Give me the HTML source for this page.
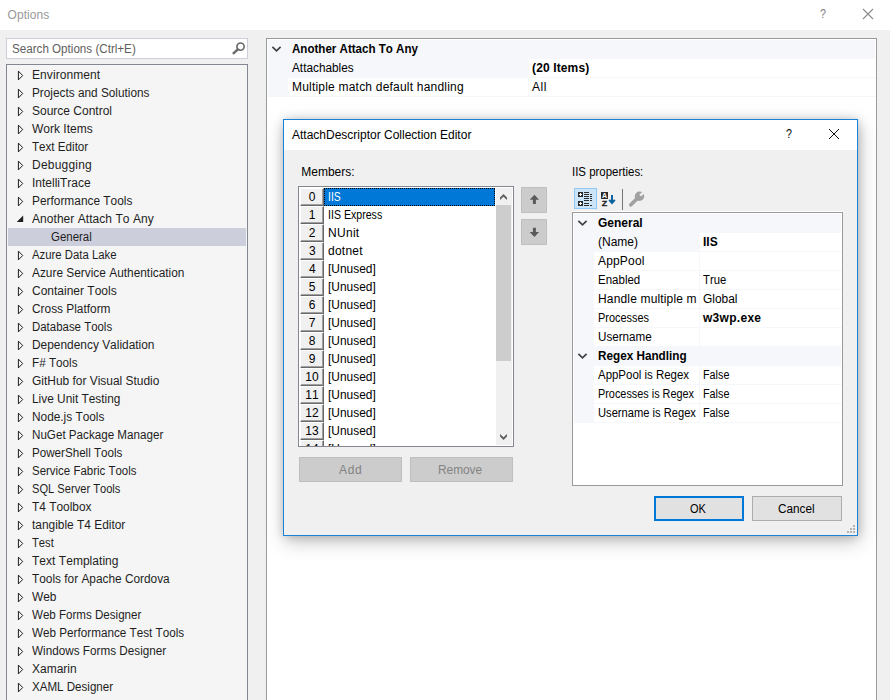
<!DOCTYPE html>
<html lang="en">
<head>
<meta charset="utf-8">
<title>Options</title>
<style>
html,body{margin:0;padding:0}
body{width:890px;height:700px;overflow:hidden;position:relative;background:#f0f0f0;font:12px/16px "Liberation Sans",sans-serif;color:#000}
div,svg{position:absolute;box-sizing:border-box}
.t{position:absolute;white-space:pre;font-kerning:none;line-height:16px;height:16px;transform-origin:0 50%;display:block}
.titlebar{left:0;top:0;width:890px;height:30px;background:#fff}
.search{left:6px;top:38px;width:242px;height:21px;background:#fff;border:1px solid #cccedb}
.tree{left:6px;top:64px;width:242px;height:650px;background:#f5f5f5;border:1px solid #828790}
.sel{left:8px;top:228px;width:238px;height:18px;background:#cccedb}
.grid{left:266px;top:38px;width:611px;height:680px;background:#fff;border:1px solid #9a9a9a}
.gut{background:#f5f7fb}
.hl{background:#f5f7fb}
.shadow{left:284px;top:120px;width:574px;height:416px;box-shadow:0 0 9px rgba(0,0,0,.20),1px 5px 18px rgba(0,0,0,.26)}
.dlg{left:283px;top:119px;width:575px;height:417px;background:#f0f0f0;border:1px solid #1883d7}
.dtitle{left:0;top:0;width:573px;height:30px;background:#fff}
.list{left:298px;top:186px;width:216px;height:261px;background:#fff;border:1px solid #828790;overflow:hidden}
.nb{left:1px;width:24px;height:18px;background:#f0f0f0;border:1px solid;border-color:#fff #696969 #696969 #fff;box-shadow:inset -1px -1px 0 #a0a0a0}
.lsel{left:25px;top:1px;width:171px;height:18px;background:#0078d7;outline:1px dotted #000;outline-offset:-1px}
.sb{left:197px;top:1px;width:16px;height:257px;background:#f0f0f0}
.thumb{left:0;top:17px;width:15px;height:156px;background:#cdcdcd}
.mv{width:26px;height:26px;background:#cccccc;border:1px solid #bfbfbf}
.dis{height:25px;background:#cccccc;border:1px solid #bfbfbf}
.btn{height:25px;background:#e1e1e1;border:1px solid #adadad}
.pg{left:572px;top:212px;width:271px;height:274px;background:#fff;border:1px solid #9a9a9a}
.a{overflow:visible}
</style>
</head>
<body>
<div class="titlebar"></div>
<svg style="left:862px;top:8px" width="12" height="12" viewBox="0 0 12 12"><path d="M1 1L11 11M11 1L1 11" stroke="#8c8c8c" stroke-width="1.1" fill="none"/></svg>

<div class="search"></div>
<svg style="left:231px;top:41px" width="16" height="15" viewBox="0 0 16 15"><circle cx="9.500" cy="5.600" r="3.650" fill="none" stroke="#6a6a6a" stroke-width="1.650"/><path d="M7.100 8.100L1.900 12.900" stroke="#6a6a6a" stroke-width="2.500" fill="none"/></svg>

<div class="tree"></div>
<div class="sel"></div>
<svg class="a" style="left:16px;top:70px" width="9" height="11" viewBox="0 0 9 11"><path d="M2.400 1.100V9.900L6.700 5.500Z" fill="none" stroke="#1e1e1e" stroke-width="1"/></svg>
<svg class="a" style="left:16px;top:88px" width="9" height="11" viewBox="0 0 9 11"><path d="M2.400 1.100V9.900L6.700 5.500Z" fill="none" stroke="#1e1e1e" stroke-width="1"/></svg>
<svg class="a" style="left:16px;top:106px" width="9" height="11" viewBox="0 0 9 11"><path d="M2.400 1.100V9.900L6.700 5.500Z" fill="none" stroke="#1e1e1e" stroke-width="1"/></svg>
<svg class="a" style="left:16px;top:124px" width="9" height="11" viewBox="0 0 9 11"><path d="M2.400 1.100V9.900L6.700 5.500Z" fill="none" stroke="#1e1e1e" stroke-width="1"/></svg>
<svg class="a" style="left:16px;top:142px" width="9" height="11" viewBox="0 0 9 11"><path d="M2.400 1.100V9.900L6.700 5.500Z" fill="none" stroke="#1e1e1e" stroke-width="1"/></svg>
<svg class="a" style="left:16px;top:160px" width="9" height="11" viewBox="0 0 9 11"><path d="M2.400 1.100V9.900L6.700 5.500Z" fill="none" stroke="#1e1e1e" stroke-width="1"/></svg>
<svg class="a" style="left:16px;top:178px" width="9" height="11" viewBox="0 0 9 11"><path d="M2.400 1.100V9.900L6.700 5.500Z" fill="none" stroke="#1e1e1e" stroke-width="1"/></svg>
<svg class="a" style="left:16px;top:196px" width="9" height="11" viewBox="0 0 9 11"><path d="M2.400 1.100V9.900L6.700 5.500Z" fill="none" stroke="#1e1e1e" stroke-width="1"/></svg>
<svg class="a" style="left:16px;top:214px" width="9" height="11" viewBox="0 0 9 11"><path d="M0.800 8H7.200V1.600Z" fill="#1e1e1e"/></svg>
<svg class="a" style="left:16px;top:250px" width="9" height="11" viewBox="0 0 9 11"><path d="M2.400 1.100V9.900L6.700 5.500Z" fill="none" stroke="#1e1e1e" stroke-width="1"/></svg>
<svg class="a" style="left:16px;top:268px" width="9" height="11" viewBox="0 0 9 11"><path d="M2.400 1.100V9.900L6.700 5.500Z" fill="none" stroke="#1e1e1e" stroke-width="1"/></svg>
<svg class="a" style="left:16px;top:286px" width="9" height="11" viewBox="0 0 9 11"><path d="M2.400 1.100V9.900L6.700 5.500Z" fill="none" stroke="#1e1e1e" stroke-width="1"/></svg>
<svg class="a" style="left:16px;top:304px" width="9" height="11" viewBox="0 0 9 11"><path d="M2.400 1.100V9.900L6.700 5.500Z" fill="none" stroke="#1e1e1e" stroke-width="1"/></svg>
<svg class="a" style="left:16px;top:322px" width="9" height="11" viewBox="0 0 9 11"><path d="M2.400 1.100V9.900L6.700 5.500Z" fill="none" stroke="#1e1e1e" stroke-width="1"/></svg>
<svg class="a" style="left:16px;top:340px" width="9" height="11" viewBox="0 0 9 11"><path d="M2.400 1.100V9.900L6.700 5.500Z" fill="none" stroke="#1e1e1e" stroke-width="1"/></svg>
<svg class="a" style="left:16px;top:358px" width="9" height="11" viewBox="0 0 9 11"><path d="M2.400 1.100V9.900L6.700 5.500Z" fill="none" stroke="#1e1e1e" stroke-width="1"/></svg>
<svg class="a" style="left:16px;top:376px" width="9" height="11" viewBox="0 0 9 11"><path d="M2.400 1.100V9.900L6.700 5.500Z" fill="none" stroke="#1e1e1e" stroke-width="1"/></svg>
<svg class="a" style="left:16px;top:394px" width="9" height="11" viewBox="0 0 9 11"><path d="M2.400 1.100V9.900L6.700 5.500Z" fill="none" stroke="#1e1e1e" stroke-width="1"/></svg>
<svg class="a" style="left:16px;top:412px" width="9" height="11" viewBox="0 0 9 11"><path d="M2.400 1.100V9.900L6.700 5.500Z" fill="none" stroke="#1e1e1e" stroke-width="1"/></svg>
<svg class="a" style="left:16px;top:430px" width="9" height="11" viewBox="0 0 9 11"><path d="M2.400 1.100V9.900L6.700 5.500Z" fill="none" stroke="#1e1e1e" stroke-width="1"/></svg>
<svg class="a" style="left:16px;top:448px" width="9" height="11" viewBox="0 0 9 11"><path d="M2.400 1.100V9.900L6.700 5.500Z" fill="none" stroke="#1e1e1e" stroke-width="1"/></svg>
<svg class="a" style="left:16px;top:466px" width="9" height="11" viewBox="0 0 9 11"><path d="M2.400 1.100V9.900L6.700 5.500Z" fill="none" stroke="#1e1e1e" stroke-width="1"/></svg>
<svg class="a" style="left:16px;top:484px" width="9" height="11" viewBox="0 0 9 11"><path d="M2.400 1.100V9.900L6.700 5.500Z" fill="none" stroke="#1e1e1e" stroke-width="1"/></svg>
<svg class="a" style="left:16px;top:502px" width="9" height="11" viewBox="0 0 9 11"><path d="M2.400 1.100V9.900L6.700 5.500Z" fill="none" stroke="#1e1e1e" stroke-width="1"/></svg>
<svg class="a" style="left:16px;top:520px" width="9" height="11" viewBox="0 0 9 11"><path d="M2.400 1.100V9.900L6.700 5.500Z" fill="none" stroke="#1e1e1e" stroke-width="1"/></svg>
<svg class="a" style="left:16px;top:538px" width="9" height="11" viewBox="0 0 9 11"><path d="M2.400 1.100V9.900L6.700 5.500Z" fill="none" stroke="#1e1e1e" stroke-width="1"/></svg>
<svg class="a" style="left:16px;top:556px" width="9" height="11" viewBox="0 0 9 11"><path d="M2.400 1.100V9.900L6.700 5.500Z" fill="none" stroke="#1e1e1e" stroke-width="1"/></svg>
<svg class="a" style="left:16px;top:574px" width="9" height="11" viewBox="0 0 9 11"><path d="M2.400 1.100V9.900L6.700 5.500Z" fill="none" stroke="#1e1e1e" stroke-width="1"/></svg>
<svg class="a" style="left:16px;top:592px" width="9" height="11" viewBox="0 0 9 11"><path d="M2.400 1.100V9.900L6.700 5.500Z" fill="none" stroke="#1e1e1e" stroke-width="1"/></svg>
<svg class="a" style="left:16px;top:610px" width="9" height="11" viewBox="0 0 9 11"><path d="M2.400 1.100V9.900L6.700 5.500Z" fill="none" stroke="#1e1e1e" stroke-width="1"/></svg>
<svg class="a" style="left:16px;top:628px" width="9" height="11" viewBox="0 0 9 11"><path d="M2.400 1.100V9.900L6.700 5.500Z" fill="none" stroke="#1e1e1e" stroke-width="1"/></svg>
<svg class="a" style="left:16px;top:646px" width="9" height="11" viewBox="0 0 9 11"><path d="M2.400 1.100V9.900L6.700 5.500Z" fill="none" stroke="#1e1e1e" stroke-width="1"/></svg>
<svg class="a" style="left:16px;top:664px" width="9" height="11" viewBox="0 0 9 11"><path d="M2.400 1.100V9.900L6.700 5.500Z" fill="none" stroke="#1e1e1e" stroke-width="1"/></svg>
<svg class="a" style="left:16px;top:682px" width="9" height="11" viewBox="0 0 9 11"><path d="M2.400 1.100V9.900L6.700 5.500Z" fill="none" stroke="#1e1e1e" stroke-width="1"/></svg>

<div class="grid">
  <div class="gut" style="left:1px;top:1px;width:607px;height:19px"></div>
  <div class="gut" style="left:1px;top:20px;width:20px;height:38px"></div>
  <div class="hl" style="left:21px;top:20px;width:241px;height:19px"></div>
  <div class="gut" style="left:21px;top:38px;width:588px;height:1px"></div>
  <div class="gut" style="left:21px;top:57px;width:588px;height:1px"></div>
  <div class="gut" style="left:261px;top:20px;width:1px;height:38px"></div>
  <svg style="left:4px;top:6px" width="11" height="8" viewBox="0 0 11 8"><path d="M1.4 1.9L5.5 5.9L9.6 1.9" fill="none" stroke="#404040" stroke-width="1.7"/></svg>
</div>

<div class="shadow"></div>
<div class="dlg">
  <div class="dtitle"></div>
</div>
<svg style="left:828px;top:128px" width="12" height="12" viewBox="0 0 12 12"><path d="M1 1L11 11M11 1L1 11" stroke="#000" stroke-width="0.95" fill="none"/></svg>

<div class="list">
  <div class="lsel"></div>
<div class="nb" style="top:1px"></div>
<div class="nb" style="top:19px"></div>
<div class="nb" style="top:37px"></div>
<div class="nb" style="top:55px"></div>
<div class="nb" style="top:73px"></div>
<div class="nb" style="top:91px"></div>
<div class="nb" style="top:109px"></div>
<div class="nb" style="top:127px"></div>
<div class="nb" style="top:145px"></div>
<div class="nb" style="top:163px"></div>
<div class="nb" style="top:181px"></div>
<div class="nb" style="top:199px"></div>
<div class="nb" style="top:217px"></div>
<div class="nb" style="top:235px"></div>
<div class="nb" style="top:253px"></div>
  <div class="sb"><div class="thumb"></div>
    <svg style="left:0;top:0" width="16" height="257" viewBox="0 0 16 257"><path d="M7.500 6L11 9.500V12L7.500 8.700L4 12V9.500Z" fill="#606060"/><path d="M7.500 252L11 248.500V246L7.500 249.300L4 246V248.500Z" fill="#606060"/></svg>
  </div>
</div>
<div class="mv" style="left:521px;top:187px"><svg style="left:7px;top:6px" width="11" height="12" viewBox="0 0 11 12"><path d="M5.400 0.800L0.700 5.800H3.900V10.100H6.900V5.800H10.100Z" fill="#5a5a5a"/></svg></div>
<div class="mv" style="left:521px;top:219px"><svg style="left:7px;top:6px" width="11" height="12" viewBox="0 0 11 12"><path d="M5.400 11.100L0.700 6.100H3.900V1.800H6.900V6.100H10.100Z" fill="#5a5a5a"/></svg></div>
<div class="dis" style="left:299px;top:457px;width:103px"></div>
<div class="dis" style="left:410px;top:457px;width:103px"></div>

<div style="left:572px;top:211px;width:271px;height:1px;background:#fff"></div>
<div style="left:574px;top:188px;width:23px;height:21px;background:#cce4f7;border:1px solid #90c8f6"></div>
<svg style="left:574px;top:188px" width="23" height="21" viewBox="0 0 23 21" shape-rendering="crispEdges"><g fill="#2b2b2b"><rect x="4" y="4" width="5" height="5"/><rect x="4" y="13" width="5" height="5"/><rect x="10" y="4" width="5" height="1"/><rect x="10" y="6" width="5" height="1"/><rect x="10" y="8" width="5" height="1"/><rect x="10" y="10" width="5" height="1"/><rect x="10" y="12" width="5" height="1"/><rect x="10" y="15" width="5" height="1"/><rect x="10" y="17" width="5" height="1"/><rect x="16" y="6" width="2" height="1"/><rect x="16" y="8" width="2" height="1"/><rect x="16" y="10" width="2" height="1"/><rect x="16" y="12" width="2" height="1"/><rect x="16" y="17" width="2" height="1"/></g><g fill="#fff"><rect x="6" y="5" width="1" height="3"/><rect x="5" y="6" width="3" height="1"/><rect x="6" y="14" width="1" height="3"/><rect x="5" y="15" width="3" height="1"/></g></svg>
<svg style="left:599px;top:188px" width="20" height="21" viewBox="0 0 20 21"><rect x="2" y="4" width="7" height="7" fill="#2b2b2b"/><text x="5.5" y="10.2" text-anchor="middle" font-family="Liberation Sans,sans-serif" font-size="7" font-weight="bold" fill="#fff">A</text><text x="5.500" y="18" text-anchor="middle" font-family="Liberation Sans,sans-serif" font-size="7.600" font-weight="bold" fill="#1e1e1e" stroke="#1e1e1e" stroke-width="0.300" textLength="5.400" lengthAdjust="spacingAndGlyphs">Z</text><path d="M13 7v8" stroke="#0f62a0" stroke-width="2" fill="none"/><path d="M10.200 11.800L13 15L15.800 11.800" stroke="#0f62a0" stroke-width="2" fill="none"/></svg>
<div style="left:622px;top:189px;width:1px;height:21px;background:#767676"></div>
<svg style="left:626px;top:188px" width="22" height="22" viewBox="0 0 22 22"><path d="M4.800 16.800L11.500 10.200" stroke="#a0a0a0" stroke-width="3.700" stroke-linecap="round" fill="none"/><circle cx="13.500" cy="8.300" r="4.700" fill="#a0a0a0"/><path d="M14.200 7.600L19 2.800" stroke="#f0f0f0" stroke-width="2.400" fill="none"/></svg>

<div class="pg">
  <div class="gut" style="left:1px;top:1px;width:267px;height:19px"></div>
  <div class="gut" style="left:1px;top:20px;width:20px;height:190px"></div>
  <div class="gut" style="left:1px;top:133px;width:267px;height:20px"></div>
  <div class="hl" style="left:21px;top:20px;width:106px;height:19px"></div>
  <div class="gut" style="left:126px;top:20px;width:1px;height:114px"></div>
  <div class="gut" style="left:126px;top:153px;width:1px;height:57px"></div>
  <div class="gut" style="left:21px;top:38px;width:248px;height:1px"></div>
  <div class="gut" style="left:21px;top:57px;width:248px;height:1px"></div>
  <div class="gut" style="left:21px;top:76px;width:248px;height:1px"></div>
  <div class="gut" style="left:21px;top:95px;width:248px;height:1px"></div>
  <div class="gut" style="left:21px;top:114px;width:248px;height:1px"></div>
  <div class="gut" style="left:21px;top:171px;width:248px;height:1px"></div>
  <div class="gut" style="left:21px;top:190px;width:248px;height:1px"></div>
  <div class="gut" style="left:21px;top:209px;width:248px;height:1px"></div>
  <svg style="left:4px;top:6px" width="11" height="8" viewBox="0 0 11 8"><path d="M1.4 1.9L5.5 5.9L9.6 1.9" fill="none" stroke="#404040" stroke-width="1.7"/></svg>
  <svg style="left:4px;top:139px" width="11" height="8" viewBox="0 0 11 8"><path d="M1.4 1.9L5.5 5.9L9.6 1.9" fill="none" stroke="#404040" stroke-width="1.7"/></svg>
</div>
<div class="btn" style="left:654px;top:496px;width:90px;border:2px solid #0078d7"></div>
<div class="btn" style="left:752px;top:496px;width:90px"></div>
<svg style="left:845px;top:524px" width="12" height="12" viewBox="0 0 12 12" shape-rendering="crispEdges"><g fill="#b4b4b4"><rect x="8" y="1" width="2" height="2"/><rect x="5" y="4" width="2" height="2"/><rect x="8" y="4" width="2" height="2"/><rect x="2" y="7" width="2" height="2"/><rect x="5" y="7" width="2" height="2"/><rect x="8" y="7" width="2" height="2"/></g></svg>

<span class="t" style="left:32px;top:67px;letter-spacing:0.072px;color:#1e1e1e;">Environment</span>
<span class="t" style="left:32px;top:85px;transform:scaleX(0.9835);color:#1e1e1e;">Projects and Solutions</span>
<span class="t" style="left:32px;top:103px;color:#1e1e1e;">Source Control</span>
<span class="t" style="left:32px;top:121px;color:#1e1e1e;">Work Items</span>
<span class="t" style="left:32px;top:139px;transform:scaleX(0.9685);color:#1e1e1e;">Text Editor</span>
<span class="t" style="left:32px;top:157px;letter-spacing:0.216px;color:#1e1e1e;">Debugging</span>
<span class="t" style="left:32px;top:175px;color:#1e1e1e;">IntelliTrace</span>
<span class="t" style="left:32px;top:193px;transform:scaleX(0.9907);color:#1e1e1e;">Performance Tools</span>
<span class="t" style="left:32px;top:211px;letter-spacing:0.050px;color:#1e1e1e;">Another Attach To Any</span>
<span class="t" style="left:51px;top:229px;transform:scaleX(0.9549);color:#1e1e1e;">General</span>
<span class="t" style="left:32px;top:247px;transform:scaleX(0.9454);color:#1e1e1e;">Azure Data Lake</span>
<span class="t" style="left:32px;top:265px;transform:scaleX(0.9895);color:#1e1e1e;">Azure Service Authentication</span>
<span class="t" style="left:32px;top:283px;color:#1e1e1e;">Container Tools</span>
<span class="t" style="left:32px;top:301px;transform:scaleX(0.9891);color:#1e1e1e;">Cross Platform</span>
<span class="t" style="left:32px;top:319px;transform:scaleX(0.9532);color:#1e1e1e;">Database Tools</span>
<span class="t" style="left:32px;top:337px;transform:scaleX(0.9923);color:#1e1e1e;">Dependency Validation</span>
<span class="t" style="left:32px;top:355px;transform:scaleX(0.9752);color:#1e1e1e;">F# Tools</span>
<span class="t" style="left:32px;top:373px;transform:scaleX(0.9948);color:#1e1e1e;">GitHub for Visual Studio</span>
<span class="t" style="left:32px;top:391px;transform:scaleX(0.9898);color:#1e1e1e;">Live Unit Testing</span>
<span class="t" style="left:32px;top:409px;transform:scaleX(0.9872);color:#1e1e1e;">Node.js Tools</span>
<span class="t" style="left:32px;top:427px;transform:scaleX(0.9696);color:#1e1e1e;">NuGet Package Manager</span>
<span class="t" style="left:32px;top:445px;transform:scaleX(0.9684);color:#1e1e1e;">PowerShell Tools</span>
<span class="t" style="left:32px;top:463px;transform:scaleX(0.9547);color:#1e1e1e;">Service Fabric Tools</span>
<span class="t" style="left:32px;top:481px;transform:scaleX(0.9270);color:#1e1e1e;">SQL Server Tools</span>
<span class="t" style="left:32px;top:499px;transform:scaleX(0.9916);color:#1e1e1e;">T4 Toolbox</span>
<span class="t" style="left:32px;top:517px;transform:scaleX(0.9920);color:#1e1e1e;">tangible T4 Editor</span>
<span class="t" style="left:32px;top:535px;transform:scaleX(0.9333);color:#1e1e1e;">Test</span>
<span class="t" style="left:32px;top:553px;letter-spacing:0.031px;color:#1e1e1e;">Text Templating</span>
<span class="t" style="left:32px;top:571px;transform:scaleX(0.9878);color:#1e1e1e;">Tools for Apache Cordova</span>
<span class="t" style="left:32px;top:589px;transform:scaleX(0.9930);color:#1e1e1e;">Web</span>
<span class="t" style="left:32px;top:607px;transform:scaleX(0.9641);color:#1e1e1e;">Web Forms Designer</span>
<span class="t" style="left:32px;top:625px;transform:scaleX(0.9748);color:#1e1e1e;">Web Performance Test Tools</span>
<span class="t" style="left:32px;top:643px;transform:scaleX(0.9769);color:#1e1e1e;">Windows Forms Designer</span>
<span class="t" style="left:32px;top:661px;color:#1e1e1e;">Xamarin</span>
<span class="t" style="left:32px;top:679px;transform:scaleX(0.9650);color:#1e1e1e;">XAML Designer</span>
<span class="t" style="left:7.53px;top:7px;letter-spacing:0.074px;color:#999;">Options</span>
<span class="t" style="left:11.57px;top:40.8px;transform:scaleX(0.9690);color:#5e5e5e;">Search Options (Ctrl+E)</span>
<span class="t" style="left:819.86px;top:6.2px;transform:scaleX(0.7903);color:#7c7c7c;font-size:13.5px;">?</span>
<span class="t" style="left:786.06px;top:126px;transform:scaleX(0.7903);font-size:13.5px;">?</span>
<span class="t" style="left:292px;top:40.5px;transform:scaleX(0.9640);font-weight:bold;">Another Attach To Any</span>
<span class="t" style="left:292px;top:59.5px;transform:scaleX(0.9828);">Attachables</span>
<span class="t" style="left:292px;top:78.5px;letter-spacing:0.205px;">Multiple match default handling</span>
<span class="t" style="left:532px;top:59.5px;letter-spacing:0.131px;font-weight:bold;">(20 Items)</span>
<span class="t" style="left:532px;top:78.5px;letter-spacing:0.583px;">All</span>
<span class="t" style="left:291.98px;top:126.5px;">AttachDescriptor Collection Editor</span>
<span class="t" style="left:301.22px;top:164px;">Members:</span>
<span class="t" style="left:572.14px;top:164px;transform:scaleX(0.9545);">IIS properties:</span>
<span class="t" style="left:328px;top:189px;transform:scaleX(0.8640);color:#fff;">IIS</span>
<span class="t" style="left:308.86px;top:189px;">0</span>
<span class="t" style="left:328px;top:207px;transform:scaleX(0.8831);">IIS Express</span>
<span class="t" style="left:308.7px;top:207px;">1</span>
<span class="t" style="left:328px;top:225px;letter-spacing:0.296px;">NUnit</span>
<span class="t" style="left:308.86px;top:225px;">2</span>
<span class="t" style="left:328px;top:243px;letter-spacing:0.245px;">dotnet</span>
<span class="t" style="left:308.9px;top:243px;">3</span>
<span class="t" style="left:328px;top:261px;transform:scaleX(0.9942);">[Unused]</span>
<span class="t" style="left:308.9px;top:261px;">4</span>
<span class="t" style="left:328px;top:279px;transform:scaleX(0.9942);">[Unused]</span>
<span class="t" style="left:308.87px;top:279px;">5</span>
<span class="t" style="left:328px;top:297px;transform:scaleX(0.9942);">[Unused]</span>
<span class="t" style="left:308.82px;top:297px;">6</span>
<span class="t" style="left:328px;top:315px;transform:scaleX(0.9942);">[Unused]</span>
<span class="t" style="left:308.86px;top:315px;">7</span>
<span class="t" style="left:328px;top:333px;transform:scaleX(0.9942);">[Unused]</span>
<span class="t" style="left:308.86px;top:333px;">8</span>
<span class="t" style="left:328px;top:351px;transform:scaleX(0.9942);">[Unused]</span>
<span class="t" style="left:308.87px;top:351px;">9</span>
<span class="t" style="left:328px;top:369px;transform:scaleX(0.9942);">[Unused]</span>
<span class="t" style="left:305.3px;top:369px;">10</span>
<span class="t" style="left:328px;top:387px;transform:scaleX(0.9942);">[Unused]</span>
<span class="t" style="left:305.36px;top:387px;">11</span>
<span class="t" style="left:328px;top:405px;transform:scaleX(0.9942);">[Unused]</span>
<span class="t" style="left:305.37px;top:405px;">12</span>
<span class="t" style="left:328px;top:423px;transform:scaleX(0.9942);">[Unused]</span>
<span class="t" style="left:305.33px;top:423px;">13</span>
<span class="t" style="left:328px;top:441px;transform:scaleX(0.9942);clip-path:inset(0 0 11px 0);">[Unused]</span>
<span class="t" style="left:305.24px;top:441px;clip-path:inset(0 0 11px 0);">14</span>
<span class="t" style="left:338.98px;top:461.5px;letter-spacing:0.723px;color:#838383;">Add</span>
<span class="t" style="left:438.43px;top:461.5px;transform:scaleX(0.9869);color:#838383;">Remove</span>
<span class="t" style="left:690.08px;top:500.5px;transform:scaleX(0.9137);">OK</span>
<span class="t" style="left:778px;top:500.5px;transform:scaleX(0.9794);">Cancel</span>
<span class="t" style="left:598px;top:214.5px;font-weight:bold;">General</span>
<span class="t" style="left:598px;top:233.5px;">(Name)</span>
<span class="t" style="left:703px;top:233.5px;font-weight:bold;">IIS</span>
<span class="t" style="left:598px;top:252.5px;letter-spacing:0.172px;">AppPool</span>
<span class="t" style="left:598px;top:271.5px;transform:scaleX(0.9592);">Enabled</span>
<span class="t" style="left:703px;top:271.5px;transform:scaleX(0.9403);">True</span>
<span class="t" style="left:598px;top:290.5px;letter-spacing:0.159px;width:99.2px;overflow:hidden;">Handle multiple matches</span>
<span class="t" style="left:703px;top:290.5px;transform:scaleX(0.9945);">Global</span>
<span class="t" style="left:598px;top:309.5px;transform:scaleX(0.9103);">Processes</span>
<span class="t" style="left:703px;top:309.5px;letter-spacing:0.283px;font-weight:bold;">w3wp.exe</span>
<span class="t" style="left:598px;top:328.5px;transform:scaleX(0.9704);">Username</span>
<span class="t" style="left:598px;top:347.5px;transform:scaleX(0.9769);font-weight:bold;">Regex Handling</span>
<span class="t" style="left:598px;top:366.5px;transform:scaleX(0.9542);">AppPool is Regex</span>
<span class="t" style="left:703px;top:366.5px;transform:scaleX(0.8990);">False</span>
<span class="t" style="left:598px;top:385.5px;transform:scaleX(0.9055);">Processes is Regex</span>
<span class="t" style="left:703px;top:385.5px;transform:scaleX(0.8990);">False</span>
<span class="t" style="left:598px;top:404.5px;transform:scaleX(0.9293);">Username is Regex</span>
<span class="t" style="left:703px;top:404.5px;transform:scaleX(0.8990);">False</span>
</body>
</html>
